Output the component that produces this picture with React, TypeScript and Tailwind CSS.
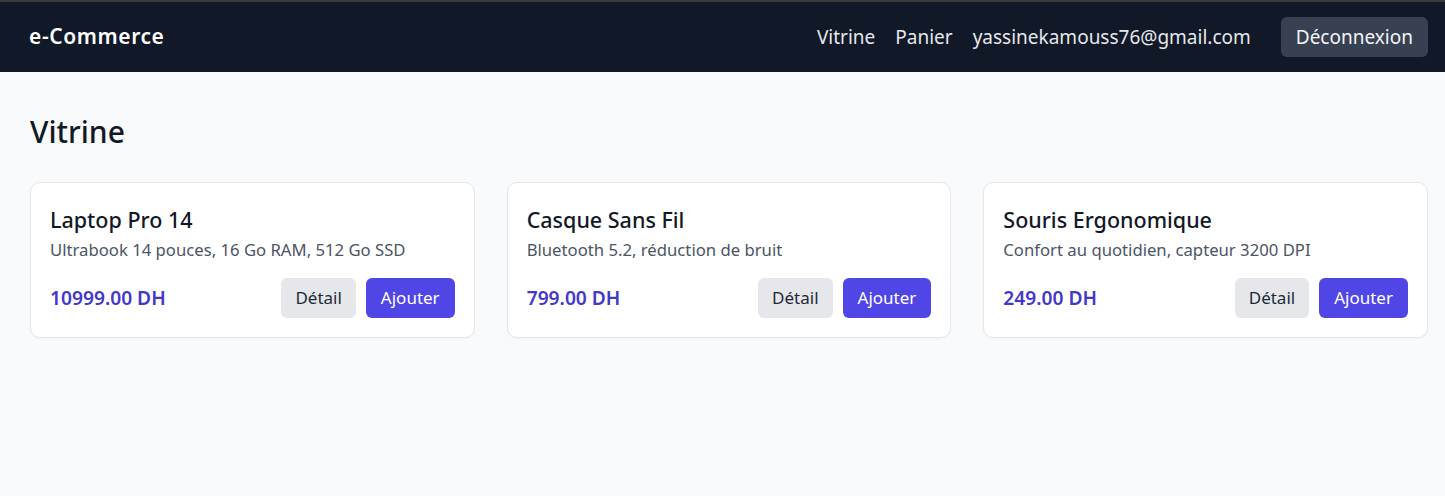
import React from "react";

const products = [
  { name: "Laptop Pro 14", desc: "Ultrabook 14 pouces, 16 Go RAM, 512 Go SSD", price: "10999.00 DH" },
  { name: "Casque Sans Fil", desc: "Bluetooth 5.2, réduction de bruit", price: "799.00 DH" },
  { name: "Souris Ergonomique", desc: "Confort au quotidien, capteur 3200 DPI", price: "249.00 DH" },
];

export default function App() {
  return (
    <div className="min-h-screen bg-[#f9fafb] text-[#111827]" style={{ fontFamily: '"Noto Sans", "Open Sans", sans-serif' }}>
      <div className="border-t-2 border-[#3b3b3b] bg-[#111827]">
        <nav className="flex h-[70px] items-center justify-between pl-[29px] pr-[17px]">
          <div className="text-[21px] font-semibold tracking-[0.6px] text-white">e-Commerce</div>
          <div className="flex items-center text-[19px] text-[#e5e7eb]">
            <span>Vitrine</span>
            <span className="ml-[20px]">Panier</span>
            <span className="ml-[20px]">yassinekamouss76@gmail.com</span>
            <button className="ml-[30px] h-[40px] rounded-[6px] bg-[#374151] px-[15px] text-[19px] text-[#f3f4f6]">
              Déconnexion
            </button>
          </div>
        </nav>
      </div>
      <main className="pl-[30px] pr-[17px] pt-[40px]">
        <h1 className="pl-[-1px] text-[30px] font-medium leading-[40px] text-[#111827]">Vitrine</h1>
        <div className="mt-[30px] grid grid-cols-3 gap-[32px]">
          {products.map((p) => (
            <div key={p.name} className="rounded-[10px] border border-[#e5e7eb] bg-white px-[19px] pb-[19px] pt-[23px] shadow-[0_1px_2px_rgba(0,0,0,0.04)]">
              <h2 className="text-[21.5px] font-medium leading-[28px] text-[#111827]">{p.name}</h2>
              <p className="mt-[4px] text-[16.7px] leading-[24px] text-[#4b5563]">{p.desc}</p>
              <div className="mt-[16px] flex items-center justify-between">
                <span className="text-[19.2px] font-semibold text-[#4338ca]">{p.price}</span>
                <div className="flex gap-[10px]">
                  <button className="h-[40px] rounded-[6px] bg-[#e5e7eb] px-[14px] text-[17px] text-[#1f2937]">Détail</button>
                  <button className="h-[40px] rounded-[6px] bg-[#4f46e5] px-[15px] text-[17px] text-white">Ajouter</button>
                </div>
              </div>
            </div>
          ))}
        </div>
      </main>
    </div>
  );
}
